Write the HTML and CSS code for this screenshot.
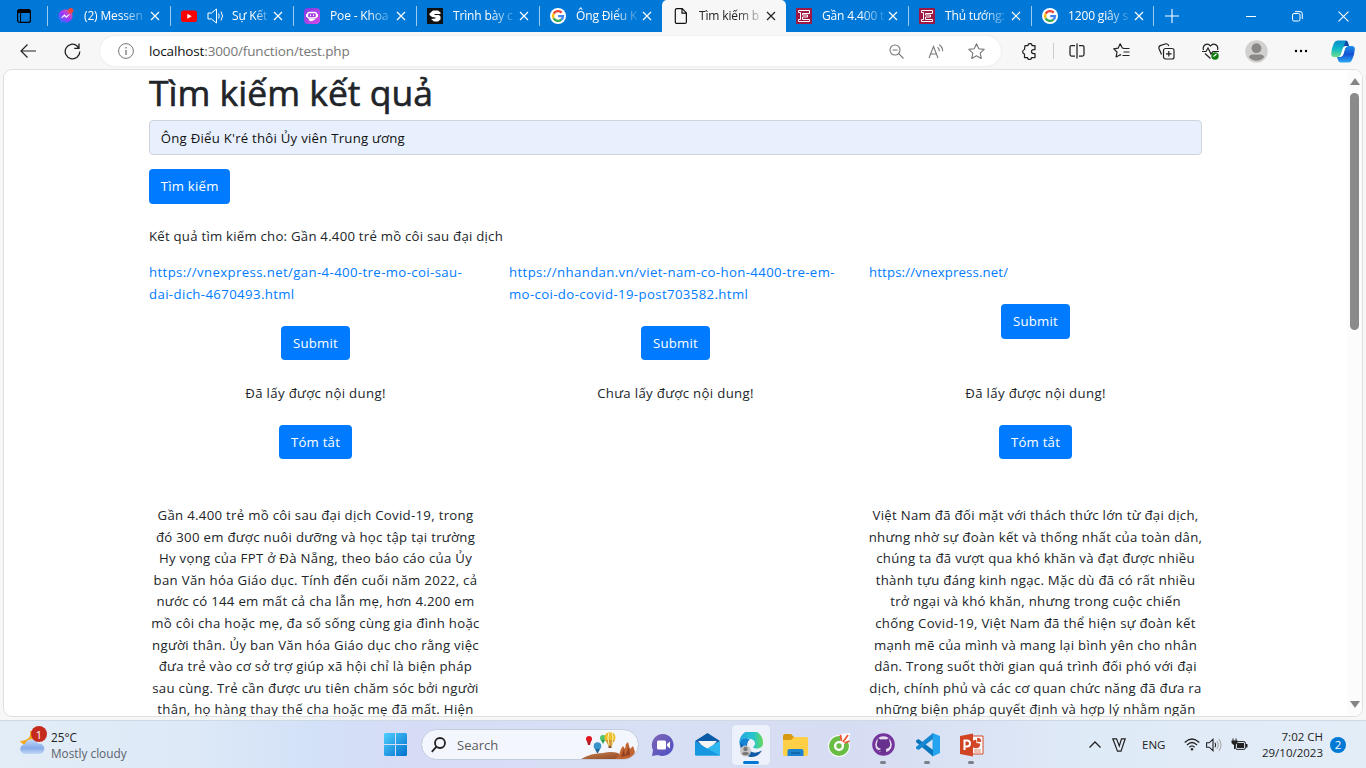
FILE: index.html
```html
<!DOCTYPE html>
<html lang="vi">
<head>
<meta charset="utf-8">
<title>Tìm kiếm</title>
<link rel="stylesheet" href="styles.css">
</head>
<body>
<svg class="defs" width="0" height="0" aria-hidden="true">
  <defs>
    <symbol id="x" viewBox="0 0 10 10"><path d="M1 1l8 8M9 1L1 9" fill="none" stroke="currentColor" stroke-width="1.2"/></symbol>
    <symbol id="google" viewBox="0 0 16 16"><circle cx="8" cy="8" r="8" fill="#fff"/><g fill="none" stroke-width="2.3"><path d="M11.7 4.6A5 5 0 0 0 3.7 5.6" stroke="#ea4335"/><path d="M3.7 5.6a5 5 0 0 0 0 4.8" stroke="#fbbc05"/><path d="M3.7 10.4a5 5 0 0 0 7.6 1.3" stroke="#34a853"/><path d="M11.3 11.7A5 5 0 0 0 13 8.2H8.2" stroke="#4285f4"/></g></symbol>
    <symbol id="vne" viewBox="0 0 16 16"><rect width="16" height="16" rx="1" fill="#9f1743"/><path d="M2.500 2.500h11v3h-7v1.500h5v2h-5v2.500h7v2h-11v-2h2v-7h-2z" fill="none" stroke="#fff" stroke-width="1"/></symbol>
  </defs>
</svg>

<header class="tabstrip">
  <div class="tab-actions"><svg width="14" height="14" viewBox="0 0 14 14"><rect x=".6" y=".6" width="12.8" height="12.8" rx="2" fill="none" stroke="#000" stroke-width="1.2"/><path d="M1 1h12v2.500H1zM3.600 4v9" stroke="#000"/></svg></div>
  <div class="tab"><svg class="fav" viewBox="0 0 16 16"><defs><linearGradient id="ms" x1="0" y1="1" x2="1" y2="0"><stop stop-color="#1684ff"/><stop offset=".5" stop-color="#9b36ff"/><stop offset="1" stop-color="#ff5f6d"/></linearGradient></defs><path d="M7.500 1.500C3.500 1.500.5 4.300.5 8c0 2 .9 3.600 2.200 4.700v2.600l2.200-1.200c.8.2 1.700.4 2.600.4 4 0 7-2.800 7-6.500s-3-6.500-7-6.500z" fill="url(#ms)"/><path d="M3.500 9.800L6.300 6.700l2 1.700 3-1.900-2.800 3.200-2-1.600z" fill="#fff" stroke="#fff" stroke-width=".6"/><circle cx="12.800" cy="2.600" r="2.600" fill="#f0433a"/></svg><span class="title">(2) Messen</span><svg class="close"><use href="#x"/></svg></div>
  <div class="tab"><svg class="fav" viewBox="0 0 16 16"><rect y="2.500" width="16" height="11.500" rx="2.500" fill="#f00"/><path d="M6.300 5.700v5L10.800 8.200z" fill="#fff"/></svg><svg class="audio" viewBox="0 0 17 16" fill="none" stroke="#fff"><path d="M1 5h3.500L9.500 1v14L4.500 11H1z"/><path d="M11.500 5.500q1.500 2.500 0 5M14 3.500q3 4.500 0 9"/></svg><span class="title">Sự Kết</span><svg class="close"><use href="#x"/></svg></div>
  <div class="tab"><svg class="fav" viewBox="0 0 16 16"><defs><linearGradient id="poe" x1="0" y1="0" x2="1" y2="1"><stop stop-color="#7a3be0"/><stop offset="1" stop-color="#d94be8"/></linearGradient></defs><rect width="16" height="16" rx="4" fill="url(#poe)"/><rect x="3.500" y="4.500" width="9" height="5.500" rx="2" fill="none" stroke="#fff" stroke-width="1.300"/><path d="M2.500 6v3M13.500 6v3M6.500 6.500v1.500M9.500 6.500v1.500M5 11.500h5.500L6.500 13z" stroke="#fff" fill="#fff"/></svg><span class="title">Poe - Khoa</span><svg class="close"><use href="#x"/></svg></div>
  <div class="tab"><svg class="fav" viewBox="0 0 16 16"><rect width="16" height="16" fill="#111"/><path d="M6 2.500h5l2.500 2V6H7.500v1H12l1.500 1.500v3L11 13.500H7L4 11l4.500-.5V9.500L5 9 2.500 7V5.500z" fill="#fff"/></svg><span class="title">Trình bày c</span><svg class="close"><use href="#x"/></svg></div>
  <div class="tab"><svg class="fav"><use href="#google"/></svg><span class="title">Ông Điểu K</span><svg class="close"><use href="#x"/></svg></div>
  <div class="tab active"><svg class="fav" viewBox="0 0 16 16" fill="none" stroke="#111" stroke-width="1.200"><path d="M3.800.6h5.400l4.200 4.300v9a1.500 1.500 0 0 1-1.500 1.500H3.800a1.500 1.500 0 0 1-1.500-1.500V2A1.500 1.500 0 0 1 3.800.6zM9 .8v4.400h4.200"/></svg><span class="title">Tìm kiếm b</span><svg class="close"><use href="#x"/></svg></div>
  <div class="tab"><svg class="fav"><use href="#vne"/></svg><span class="title">Gần 4.400 t</span><svg class="close"><use href="#x"/></svg></div>
  <div class="tab"><svg class="fav"><use href="#vne"/></svg><span class="title">Thủ tướng:</span><svg class="close"><use href="#x"/></svg></div>
  <div class="tab last"><svg class="fav"><use href="#google"/></svg><span class="title">1200 giây s</span><svg class="close"><use href="#x"/></svg></div>
  <div class="newtab"><svg width="14" height="14" viewBox="0 0 14 14"><path d="M7 0v14M0 7h14" stroke="#fff" stroke-width="1.100"/></svg></div>
  <div class="winbtns">
    <span><svg width="10" height="10"><path d="M0 5.500h10" stroke="#fff"/></svg></span>
    <span><svg width="11" height="11" fill="none" stroke="#fff"><rect x=".5" y="2.500" width="7.500" height="7.500" rx="1.500"/><path d="M3 .6h5a2.200 2.200 0 0 1 2.300 2.300V8"/></svg></span>
    <span><svg width="11" height="11" viewBox="0 0 10 10"><path d="M.5.5l9 9M9.500.5l-9 9" stroke="#fff"/></svg></span>
  </div>
</header>

<nav class="toolbar">
  <span class="tb back"><svg width="16" height="14" viewBox="0 0 16 14" fill="none" stroke="#222" stroke-width="1.200"><path d="M16 7H1M7.500.5L1 7l6.500 6.500"/></svg></span>
  <span class="tb reload"><svg width="17" height="17" viewBox="0 0 17 17" fill="none" stroke="#222" stroke-width="1.300"><path d="M15.800 8.500A7.300 7.300 0 1 1 13.200 2.900M15 .5v4.800h-4.800M15 5.200L13 3"/></svg></span>
  <div class="address">
    <svg class="info" width="16" height="16" viewBox="0 0 16 16" fill="none" stroke="#777"><circle cx="8" cy="8" r="7.400"/><path d="M8 7v5M8 4v1.500" stroke-width="1.300"/></svg>
    <span class="url"><b>localhost</b>:3000/function/test.php</span>
    <span class="ai"><svg width="15" height="15" viewBox="0 0 15 15" fill="none" stroke="#777" stroke-width="1.100"><circle cx="6" cy="6" r="5"/><path d="M3.500 6h5M9.700 9.700L14.500 14.500"/></svg></span>
    <span class="ai"><svg width="16" height="15" viewBox="0 0 16 15" fill="none" stroke="#777" stroke-width="1.100"><path d="M1 14L5.500 2.500 10 14M2.500 10h6M9.500 3.200q2 1.800 1.800 4M11.300.8q3.500 2.500 3.300 6.500"/></svg></span>
    <span class="ai"><svg width="17" height="16" viewBox="0 0 17 16" fill="none" stroke="#777" stroke-width="1.100" stroke-linejoin="round"><path d="M8.500.8l2.300 4.900 5.400.7-4 3.700 1 5.300-4.700-2.600-4.700 2.600 1-5.300-4-3.700 5.400-.7z"/></svg></span>
  </div>
  <span class="tb w40 gap"><svg width="16" height="17" viewBox="0 0 16 17" fill="none" stroke="#222" stroke-width="1.250"><path d="M4 2.500h3a2 2 0 0 1 4 0h3v4h-1.500a2 2 0 0 0 0 4H14v4h-3.500a2 2 0 0 1-4 0H3.500V11a2.300 2.300 0 0 1 0-4.500z" stroke-linejoin="round"/></svg></span>
  <span class="sep"></span>
  <span class="tb w40"><svg width="16" height="16" viewBox="0 0 16 16" fill="none" stroke="#222" stroke-width="1.250"><path d="M8 .5v15M6 2.500H2.500A1.500 1.500 0 0 0 1 4v7.500A1.500 1.500 0 0 0 2.500 13H6M10 2.500h3.500A1.500 1.500 0 0 1 15 4v7.500a1.500 1.500 0 0 1-1.500 1.500H10"/></svg></span>
  <span class="tb w48"><svg width="17" height="16" viewBox="0 0 17 16" fill="none" stroke="#222" stroke-width="1.200" stroke-linejoin="round"><path d="M11 5.400L9.300 5 7.200.8 5.100 5.200.7 5.900 4 9l-.9 5 4.200-2.300.8.400M10.500 5.500h6M10.500 9h6M9.500 12.500h7"/></svg></span>
  <span class="tb w40"><svg width="17" height="17" viewBox="0 0 17 17" fill="none" stroke="#222" stroke-width="1.200"><rect x="5.500" y="5.500" width="10.500" height="10.500" rx="2"/><path d="M3.500 11.500L1 5.500Q.5 3.500 2.200 2.600L8 .8q2-.4 2.800 2.200M10.800 8v5.600M8 10.800h5.600"/></svg></span>
  <span class="tb w48"><svg width="18" height="17" viewBox="0 0 18 17" fill="none" stroke="#222" stroke-width="1.200"><path d="M1.500 7C0 2 5.500-1 8.500 3c3-4 8.500-1 7 4M0 8.500h4l2-3.500 3 6 1.800-2.500H17M3 10.500l5.500 5"/><circle cx="13" cy="13" r="3.700" fill="#0f7b0f" stroke="none"/><path d="M11.500 13.500l3-2.500" stroke="#fff"/></svg></span>
  <span class="tb w42"><svg width="23" height="23" viewBox="0 0 23 23"><circle cx="11.500" cy="11.500" r="11.200" fill="#d2d0ce"/><circle cx="11.500" cy="8.200" r="4.900" fill="#8a8886"/><path d="M3.800 17q1-2.500 3.500-2.500h8.500q2.500 0 3.500 2.500a10 10 0 0 1-15.500 0z" fill="#8a8886"/></svg></span>
  <span class="tb w48"><svg width="14" height="4"><circle cx="2" cy="2" r="1.200"/><circle cx="7" cy="2" r="1.200"/><circle cx="12" cy="2" r="1.200"/></svg></span>
  <span class="tb copilot"><svg width="24" height="23" viewBox="0 0 24 23"><defs><linearGradient id="ca" x1="0" y1="0" x2="0" y2="1"><stop stop-color="#078bcb"/><stop offset=".5" stop-color="#0fb8c8"/><stop offset="1" stop-color="#6ee08c"/></linearGradient><linearGradient id="cb" x1="0" y1="0" x2="0" y2="1"><stop stop-color="#1b8fe8"/><stop offset=".5" stop-color="#1752d4"/><stop offset="1" stop-color="#29a9f5"/></linearGradient></defs><path d="M17.500 22.500h-8q-1.800 0-2.300-2L6 17h3q2.500 0 3.300-2.700L14 8.500Q14.700 6 17 6h4q3 0 2.800 3.500-.4 5.500-2.800 10.500-1.200 2.500-3.500 2.500z" fill="url(#cb)"/><path d="M6.500.5h8q1.800 0 2.300 2L18 6h-3q-2.500 0-3.300 2.700L10 14.500Q9.300 17 7 17H3q-3 0-2.800-3.500Q.6 8 3 3 4.200.5 6.500.5z" fill="url(#ca)"/><path d="M15 .5q1.500.5 2 2L18 6h-3q-1.500 0-2.500 1z" fill="#1347a8"/><path d="M15 6h2q-2.300 0-3 2.500l-1.700 5.800Q11.500 17 9 17H7q2.300 0 3-2.500l1.700-5.800Q12.500 6 15 6z" fill="#fff"/></svg></span>
</nav>

<div class="viewport">
  <main class="page">
    <h1>Tìm kiếm kết quả</h1>
    <div class="field">Ông Điểu K'ré thôi Ủy viên Trung ương</div>
    <button class="btn">Tìm kiếm</button>
    <p class="lead">Kết quả tìm kiếm cho: Gần 4.400 trẻ mồ côi sau đại dịch</p>
    <section class="row links">
      <div><a>https://vnexpress.net/gan-4-400-tre-mo-coi-sau-<br>dai-dich-4670493.html</a><button class="btn">Submit</button></div>
      <div><a>https://nhandan.vn/viet-nam-co-hon-4400-tre-em-<br>mo-coi-do-covid-19-post703582.html</a><button class="btn">Submit</button></div>
      <div><a class="tight">https://vnexpress.net/</a><button class="btn">Submit</button></div>
    </section>
    <section class="row results">
      <div><p class="status">Đã lấy được nội dung!</p><button class="btn">Tóm tắt</button>
        <p class="text">Gần 4.400 trẻ mồ côi sau đại dịch Covid-19, trong<br>đó 300 em được nuôi dưỡng và học tập tại trường<br>Hy vọng của FPT ở Đà Nẵng, theo báo cáo của Ủy<br>ban Văn hóa Giáo dục. Tính đến cuối năm 2022, cả<br>nước có 144 em mất cả cha lẫn mẹ, hơn 4.200 em<br>mồ côi cha hoặc mẹ, đa số sống cùng gia đình hoặc<br>người thân. Ủy ban Văn hóa Giáo dục cho rằng việc<br>đưa trẻ vào cơ sở trợ giúp xã hội chỉ là biện pháp<br>sau cùng. Trẻ cần được ưu tiên chăm sóc bởi người<br>thân, họ hàng thay thế cha hoặc mẹ đã mất. Hiện</p></div>
      <div><p class="status">Chưa lấy được nội dung!</p></div>
      <div><p class="status">Đã lấy được nội dung!</p><button class="btn">Tóm tắt</button>
        <p class="text">Việt Nam đã đối mặt với thách thức lớn từ đại dịch,<br>nhưng nhờ sự đoàn kết và thống nhất của toàn dân,<br>chúng ta đã vượt qua khó khăn và đạt được nhiều<br>thành tựu đáng kinh ngạc. Mặc dù đã có rất nhiều<br>trở ngại và khó khăn, nhưng trong cuộc chiến<br>chống Covid-19, Việt Nam đã thể hiện sự đoàn kết<br>mạnh mẽ của mình và mang lại bình yên cho nhân<br>dân. Trong suốt thời gian quá trình đối phó với đại<br>dịch, chính phủ và các cơ quan chức năng đã đưa ra<br>những biện pháp quyết định và hợp lý nhằm ngăn</p></div>
    </section>
  </main>
  <aside class="scrollbar"><i class="up"></i><i class="thumb"></i><i class="down"></i></aside>
</div>

<footer class="taskbar">
  <div class="weather">
    <svg width="28" height="30" viewBox="0 0 28 30"><defs><linearGradient id="cl" x1="0" y1="0" x2="0" y2="1"><stop stop-color="#c3d9fa"/><stop offset=".6" stop-color="#86abe8"/><stop offset="1" stop-color="#c3d8f8"/></linearGradient></defs><path d="M10 5q2 9-10 10 3 5 9 4l8-4-3-10z" fill="#f7a821"/><path d="M5.500 28a5 5 0 0 1-.5-10A7 7 0 0 1 18 17.500 5.300 5.300 0 1 1 19 28z" fill="url(#cl)"/><circle cx="19" cy="8" r="8" fill="#c42b1c"/></svg>
    <span class="count">1</span>
    <div class="wtext"><div>25°C</div><div class="muted">Mostly cloudy</div></div>
  </div>
  <div class="apps">
    <span class="app start"><svg width="23" height="23" viewBox="0 0 23 23"><defs><linearGradient id="win" x1="0" y1="0" x2="1" y2="1"><stop stop-color="#4fd0ff"/><stop offset="1" stop-color="#0070cc"/></linearGradient></defs><path d="M1 0h10v11H0V1zM12 0h10l1 1v10H12zM0 12h11v11H1l-1-1zM12 12h11v10l-1 1H12z" fill="url(#win)"/></svg></span>
    <div class="search"><svg width="15" height="16" viewBox="0 0 15 16" fill="none" stroke="#222" stroke-width="1.800"><circle cx="9" cy="6" r="5"/><path d="M5.500 9.700L.8 14.800"/></svg><span>Search</span>
      <svg class="art" width="56" height="29" viewBox="0 0 56 29"><defs><linearGradient id="hill" x1="0" y1="0" x2="1" y2="1"><stop stop-color="#c98250"/><stop offset="1" stop-color="#8e4720"/></linearGradient></defs><path d="M0 29q10-6 22-6 8-2 15 0l6 6z" fill="url(#hill)"/><path d="M34 29l4-4 2-6 2-3 2 3 1-5 2-2 2 7 3-3 2 6q-2 6-8 7z" fill="#c06432"/><path d="M40 27l3-8 1 7 4-9 1 8" fill="#933f20"/><circle cx="8" cy="9" r="3" fill="#df1820"/><path d="M6 11h4l-1 4H7z" fill="#b51620"/><circle cx="16.500" cy="16" r="3.800" fill="#3793c9"/><path d="M14 19h5l-2 4h-1z" fill="#1c6599"/><circle cx="22" cy="8" r="3" fill="#4fc36a"/><path d="M20 10h4l-2 4z" fill="#299a58"/><circle cx="29" cy="7.500" r="5.500" fill="#ecbf31"/><path d="M24.500 10h9l-3 6h-3z" fill="#ce962b"/><path d="M28 2q-2 6 0 13M31 2q2 6 0 12" stroke="#fff0ae" fill="none"/><path d="M27.500 16h3v2h-3z" fill="#89552c"/></svg></div>
    <span class="app"><svg width="24" height="24" viewBox="0 0 24 24"><defs><linearGradient id="ch" x1="0" y1="0" x2="1" y2="1"><stop stop-color="#8066b5"/><stop offset="1" stop-color="#4a50c4"/></linearGradient></defs><path d="M12 1a11 11 0 1 1-5 21L1 23l1-6A11 11 0 0 1 12 1z" fill="url(#ch)"/><rect x="6" y="7.500" width="9" height="9" rx="1.500" fill="#fff"/><path d="M16 11l3-2.500v7L16 13z" fill="#fff"/></svg></span>
    <span class="app"><svg width="25" height="25" viewBox="0 0 25 25"><path d="M0 9L12.500 1 25 9l-12.500 8z" fill="#0b5aa7"/><path d="M3 9h19l-8 9h-3z" fill="#f5f5f5"/><path d="M0 9l12.500 8L0 23z" fill="#198bd8"/><path d="M25 9L0 23.500h25z" fill="#30b7f0"/><path d="M0 10l25 13.500H1Q0 23.500 0 22z" fill="#1697df"/></svg></span>
    <span class="app selected"><svg width="25" height="25" viewBox="0 0 25 25"><defs><linearGradient id="ed" x1="0" y1="0" x2="1" y2="0"><stop stop-color="#28a6e5"/><stop offset=".6" stop-color="#27c4cd"/><stop offset="1" stop-color="#67d95a"/></linearGradient></defs><path d="M1 14a11.800 11.800 0 1 1 23-4c1 7-8 8-10 5 5-4 0-9-6-8s-7 7-7 7z" fill="url(#ed)"/><path d="M1 11Q4 5 10 7.500 6 13 10 18q5 5 13 .5-4 7-12 6.500Q1 23 1 11z" fill="#105ba5"/><path d="M1 11Q5 5 11 7.500 6 10 8 17z" fill="#1686d7"/><circle cx="6.500" cy="19" r="5.500" fill="#c9c7c5"/><circle cx="6.500" cy="17" r="2.200" fill="#777"/><path d="M3 22q0-2 3.500-2t3.500 2q-3.500 2.500-7 0z" fill="#777"/></svg></span>
    <span class="app"><svg width="25" height="24" viewBox="0 0 25 24"><path d="M0 3q0-2 2-2h6l3 3h13v5H0z" fill="#d99a13"/><path d="M0 7h8l3-3h12q2 0 2 2v15q0 2-2 2H2q-2 0-2-2z" fill="#ffcf48"/><path d="M4.500 23v-5q0-2 2-2h12q2 0 2 2v5z" fill="#1b82cf"/><path d="M8 20h9" stroke="#0b5fa5" stroke-width="1.500"/></svg></span>
    <span class="app"><svg width="24" height="24" viewBox="0 0 24 24"><circle cx="12" cy="13" r="11" fill="#fff"/><circle cx="12" cy="13" r="7.300" fill="none" stroke="#69bd45" stroke-width="5.500"/><path d="M13 11L14 1l9-1-1 8-8 5z" fill="#fff"/><path d="M13.500 2l1 6M21 2l-5 7M22.500 8l-5 2" stroke="#ef5432" stroke-width="1.800"/><circle cx="12" cy="13" r="5" fill="#fff"/><circle cx="12" cy="13" r="2.700" fill="#69bd45"/></svg></span>
    <span class="app running"><svg width="23" height="23" viewBox="0 0 23 23"><circle cx="11.500" cy="11.500" r="11.300" fill="#75349b"/><circle cx="11.500" cy="11.500" r="8.300" fill="#e6ddf1"/><path d="M5.800 5l3 1.500q2.700-.6 5.400 0l3-1.500.3 3.500q2.600 6-3.600 7.500l.6 4.500h-6v-2.200q-3 .4-4-2.300 2 1.500 4 .6l.3-.8Q3 14 5.500 8.500z" fill="#67308d"/></svg></span>
    <span class="app running"><svg width="25" height="25" viewBox="0 0 25 25"><path d="M17.500 1L25 4v17l-7.500 3.500z" fill="#24a3ee"/><path d="M1 8.500L3.500 7 18 18v6.500L1 10z" fill="#0876bc"/><path d="M1 16.500L3.500 18 18 7V1L1 15z" fill="#1687d0"/></svg></span>
    <span class="app running"><svg width="25" height="24" viewBox="0 0 25 24"><path d="M10 3h14v18H10z" fill="#fff" stroke="#d24726"/><path d="M17 10V7a4 4 0 1 0 4 4zM18.500 5v3.500H22A3.500 3.500 0 0 0 18.500 5M15 17h7M15 19h7" fill="#d24726" stroke="#d24726" stroke-width=".7"/><path d="M1 3l13-2.500v23L1 21z" fill="#d04423"/><path d="M5.500 17V7.500H8a3 3 0 0 1 0 6H6" fill="none" stroke="#fff" stroke-width="2"/></svg></span>
  </div>
  <div class="tray">
    <span class="chev"><svg width="12" height="7" fill="none" stroke="#222" stroke-width="1.300"><path d="M.5 6.500L6 1l5.500 5.500"/></svg></span>
    <span class="vkey"><svg width="14" height="14" viewBox="0 0 14 14" fill="none" stroke="#222" stroke-width="1.200"><path d="M.8.800h3.700L7.300 8l2.200-7.200h3.700L9 13.200H5.500z"/></svg></span>
    <span class="eng">ENG</span>
    <span class="wifi"><svg width="16" height="13" viewBox="0 0 16 13" fill="none" stroke="#222" stroke-width="1.200"><path d="M.7 4.500Q8-2.500 15.300 4.500M3 7q5-5 10 0M5.300 9.300q2.700-2.800 5.400 0"/><circle cx="8" cy="11.300" r="1.200" fill="#222" stroke="none"/></svg></span>
    <span class="vol"><svg width="16" height="14" viewBox="0 0 16 14" fill="none" stroke="#222" stroke-width="1.100"><path d="M.6 4.800h2.600L7 1.300v11.400L3.200 9.200H.6zM9 4.800q1.300 2.200 0 4.400"/><path d="M11 3q2.500 4 0 8M13 1q4 6 0 12" stroke="#aaa"/></svg></span>
    <span class="bat"><svg width="17" height="14" viewBox="0 0 17 14"><rect x="4.600" y="3.600" width="9.800" height="7.800" rx="1.500" fill="none" stroke="#222"/><path d="M6 5h7v5H6zM15 6h1.500v3.500H15zM.5 2.500h6V5L4.300 7H2.700L.5 5zM1.500.5h1v2h-1zM4.500.5h1v2h-1zM3 7h1v4H3z" fill="#222"/></svg></span>
    <div class="clock"><div>7:02 CH</div><div>29/10/2023</div></div>
    <span class="badge">2</span>
  </div>
</footer>
</body>
</html>
```
FILE: styles.css
```css
* { box-sizing: border-box; }
body { margin: 0; width: 1366px; height: 768px; overflow: hidden; background: #f7f7f7; font-family: "Open Sans", "Noto Sans", sans-serif; display: flex; flex-direction: column; color: #212529; }
svg { display: block; flex: none; }
.defs { position: absolute; }
p, h1 { margin: 0; }

.tabstrip { height: 32px; flex: none; background: #0078d7; display: flex; align-items: stretch; }
.tab-actions { width: 47px; padding-left: 17px; display: flex; align-items: center; }
.tab { width: 123px; display: flex; align-items: center; padding-left: 11px; font-size: 12px; letter-spacing: -.15px; color: #fff; background: linear-gradient(#9dcbf0, #9dcbf0) 0 6px / 1px 20px no-repeat; }
.fav { width: 16px; height: 16px; margin-right: 10px; }
.audio { width: 17px; height: 16px; margin-right: 8px; }
.title { flex: 1; min-width: 0; white-space: nowrap; line-height: 20px; -webkit-mask-image: linear-gradient(90deg, #000 60%, transparent 105%); mask-image: linear-gradient(90deg, #000 60%, transparent 105%); }
.close { width: 10px; height: 10px; margin: 0 10px 0 3px; }
.tab.active { width: 124px; background: #f7f7f7; color: #222; border-radius: 5px 5px 0 0; }
.tab.active + .tab { background: none; width: 122px; padding-left: 10px; }
.tab.last { background: linear-gradient(#9dcbf0, #9dcbf0) 0 6px / 1px 20px no-repeat, linear-gradient(#9dcbf0, #9dcbf0) 100% 6px / 1px 20px no-repeat; }
.newtab { display: flex; align-items: center; padding-left: 11px; }
.winbtns { margin-left: auto; display: flex; }
.winbtns span { width: 46px; display: flex; align-items: center; justify-content: center; }

.toolbar { height: 37px; flex: none; display: flex; align-items: center; padding-top: 1px; }
.tb { display: flex; align-items: center; justify-content: center; }
.back { width: 56px; }
.reload { width: 32px; margin-right: 12px; }
.address { width: 901px; height: 30px; border-radius: 15px; background: #fff; box-shadow: 0 0 2px #ddd; display: flex; align-items: center; padding-left: 18px; padding-right: 5px; }
.info { margin-right: 15px; }
.url { font-size: 13.500px; color: #767676; letter-spacing: -.14px; margin-right: auto; }
.url b { font-weight: 400; color: #111; }
.ai { width: 40px; display: flex; justify-content: center; }
.gap { margin-left: 8px; }
.w40 { width: 40px; } .w42 { width: 42px; } .w48 { width: 48px; }
.w48 + .w40 { width: 42px; }
.sep { width: 8px; height: 16px; background: linear-gradient(#ccc, #ccc) 4px 0 / 1px 16px no-repeat; }
.copilot { width: 36px; }

.viewport { height: 648px; flex: none; margin: 0 3px; border: 1px solid #e0e0e0; border-radius: 9px; background: #fff; overflow: hidden; display: flex; }
.page { width: 1080px; margin-left: 131.500px; padding: 0 13.500px; font-size: 13.200px; letter-spacing: .24px; line-height: 21.600px; white-space: nowrap; }
.page h1 { font-size: 35.500px; line-height: 43.200px; letter-spacing: 0; margin-bottom: 7.200px; font-weight: 400; -webkit-text-stroke: .6px #212529; padding-top: 1px; height: 43.200px; }
.field { height: 35px; border: 1px solid #ced4da; border-radius: 4px; background: #e8f0fe; color: #111; padding: 6.400px 10.800px 0; margin-bottom: 14px; }
.btn { display: block; border: 0; border-radius: 4px; background: #007bff; color: #fff; font: inherit; letter-spacing: .24px; height: 34.200px; padding: 1px 11.700px 0; }
.lead { margin: 22.400px 0 13.600px; }
.row { display: grid; grid-template-columns: repeat(3, 360px); }
.row > div { width: 333px; display: flex; flex-direction: column; align-items: center; }
.links { height: 120.800px; }
.links a { align-self: flex-start; color: #007bff; padding-top: .8px; margin-bottom: 20.800px; letter-spacing: .38px; }
.links a.tight { letter-spacing: .15px; }
.results { text-align: center; }
.status { padding-top: .8px; letter-spacing: .34px; }
.results .btn { margin-top: 20.800px; }
.text { margin-top: 45.800px; letter-spacing: .3px; }
.scrollbar { margin-left: auto; width: 15px; background: #fcfcfc; display: flex; flex-direction: column; align-items: center; padding: 8px 0 8px; }
.scrollbar i { display: block; flex: none; }
.up { border: 5px solid transparent; border-top: 0; border-bottom: 7px solid #858585; }
.thumb { width: 9px; height: 237px; border-radius: 5px; background: #8a8a8a; margin-top: 8px; }
.down { border: 5px solid transparent; border-bottom: 0; border-top: 7px solid #858585; margin-top: auto; }

.taskbar { height: 48px; margin-top: 3px; flex: none; border-top: 1px solid #cfd9e6; background: linear-gradient(90deg, #e2edf7 0, #dde9f7 14%, #d3e1f8 23%, #d6dcf5 30%, #d8e0f5 48%, #d6dcf2 62%, #dfeaf7 80%, #e3edf8 100%); display: flex; position: relative; color: #222; }
.weather { width: 382px; padding-left: 20px; display: flex; align-items: flex-start; padding-top: 5px; position: relative; }
.count { position: absolute; left: 31px; top: 6px; width: 16px; font-size: 11px; line-height: 16px; color: #fff; text-align: center; }
.wtext { font-size: 11.800px; line-height: 16px; margin: 3px 0 0 3px; }
.muted { color: #5b626b; }
.apps { display: flex; align-items: center; }
.start { width: 27px; margin-right: 12px; }
.search { width: 218px; height: 31px; border-radius: 16px; border: 1px solid #c3cde0; background: #f3f6fc; display: flex; align-items: center; padding-left: 9px; font-size: 13px; color: #5c5c5c; margin-right: 5px; overflow: hidden; }
.search span { margin-left: 11px; }
.art { margin-left: auto; margin-right: 1px; }
.app { height: 40px; display: flex; align-items: center; justify-content: center; position: relative; }
.app:not(.start) { width: 38px; margin-right: 6px; border-radius: 4px; }
.app.selected { background: #edf1fb; box-shadow: 0 0 1px #bac5d9; }
.selected::after, .running::after { content: ""; position: absolute; bottom: 1px; width: 6px; height: 3px; border-radius: 2px; background: #7b8088; }
.selected::after { width: 16px; background: #0078d4; }
.tray { margin-left: auto; padding-right: 20px; display: flex; align-items: center; font-size: 11.500px; }
.chev { margin-right: 11px; }
.vkey { margin-right: 16px; }
.eng { width: 26px; margin-right: 16px; }
.wifi { margin-right: 6px; }
.vol { margin-right: 9px; }
.bat { margin-right: 6px; }
.clock { width: 69px; text-align: right; line-height: 16px; }
.badge { width: 16px; height: 16px; border-radius: 50%; background: #0078d4; color: #fff; line-height: 16px; text-align: center; margin-left: 7px; }
```
